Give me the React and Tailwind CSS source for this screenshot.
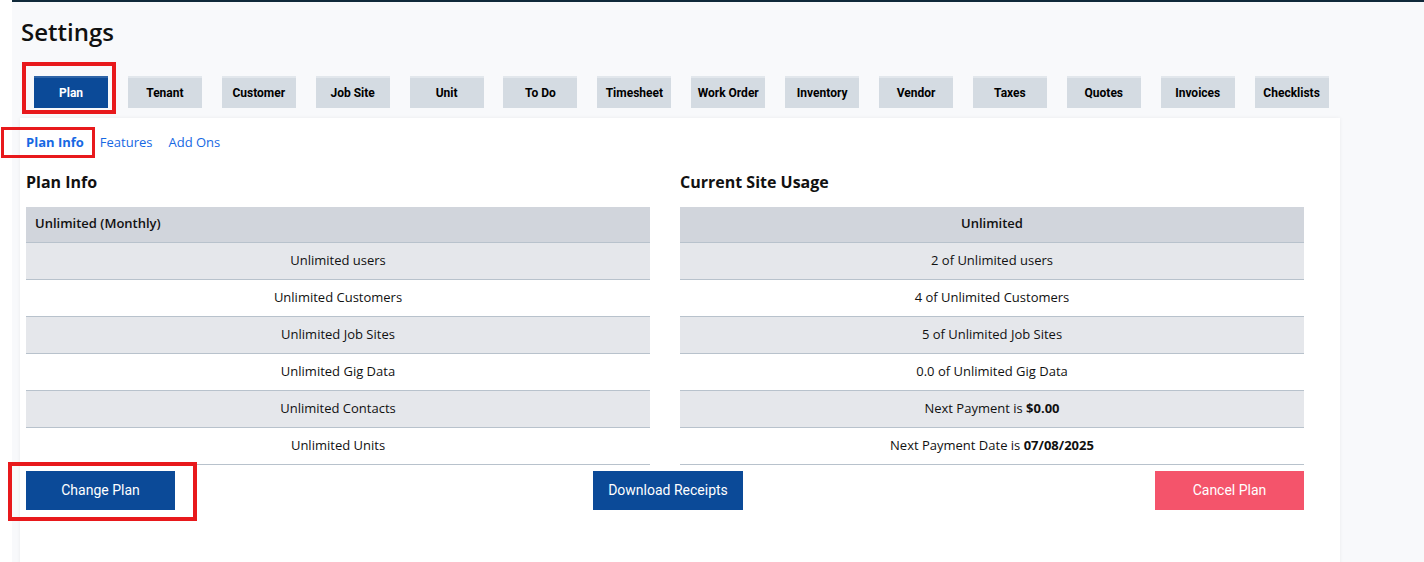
import React from 'react';

const tabs = ['Plan', 'Tenant', 'Customer', 'Job Site', 'Unit', 'To Do', 'Timesheet', 'Work Order', 'Inventory', 'Vendor', 'Taxes', 'Quotes', 'Invoices', 'Checklists'];

const planRows = ['Unlimited users', 'Unlimited Customers', 'Unlimited Job Sites', 'Unlimited Gig Data', 'Unlimited Contacts', 'Unlimited Units'];

const usageRows = [
  <span>2 of Unlimited users</span>,
  <span>4 of Unlimited Customers</span>,
  <span>5 of Unlimited Job Sites</span>,
  <span>0.0 of Unlimited Gig Data</span>,
  <span>Next Payment is <b>$0.00</b></span>,
  <span>Next Payment Date is <b>07/08/2025</b></span>,
];

function InfoTable({ header, headerAlign, rows }) {
  return (
    <div className="w-[624px]">
      <div className={`h-[36px] flex items-center px-[9px] bg-[#d1d5dc] border-b border-[#b8c2cc] font-semibold ${headerAlign}`}>
        {header}
      </div>
      {rows.map((r, i) => (
        <div
          key={i}
          className={`h-[37px] flex items-center justify-center border-b border-[#b8c2cc] ${i % 2 === 0 ? 'bg-[#e5e7eb]' : 'bg-white'}`}
        >
          {r}
        </div>
      ))}
    </div>
  );
}

export default function App() {
  return (
    <div className="relative flex min-h-[562px] bg-white text-[#111] overflow-hidden" style={{ fontFamily: '"Open Sans", sans-serif' }}>
      <div className="w-3 shrink-0" />
      <div className="flex-1 bg-[#f8f9fb] border-t-2 border-[#10293a] pl-2">
        <h1 className="pt-[15px] pl-px text-[24px] leading-[30px] font-semibold">Settings</h1>

        {/* ── Tabs ── */}
        <div className="flex gap-[19.9px] pl-[14px] mt-[29px]" style={{ fontFamily: 'Roboto, sans-serif' }}>
          {tabs.map((t, i) => (
            <div
              key={t}
              className={`w-[74px] h-[32px] flex items-center justify-center text-[12px] font-bold border-t-2 ${
                i === 0 ? 'bg-[#0b4a98] border-[#2f65a8] text-white' : 'bg-[#d4dbe2] border-[#e2e7ec] text-black'
              }`}
            >
              {t}
            </div>
          ))}
        </div>

        {/* ── Card ── */}
        <div className="w-[1320px] mt-[10px] bg-white shadow-[0_0_4px_rgba(0,0,0,0.06)] pl-1.5 pb-16 text-[13px]">
          <div className="flex gap-4 pt-[15px] text-[#1668e3]">
            <span className="font-bold">Plan Info</span>
            <span>Features</span>
            <span>Add Ons</span>
          </div>

          <div className="flex gap-[30px] mt-[17px]">
            <div>
              <h2 className="text-[16px] font-bold leading-[24px] mb-[13px]">Plan Info</h2>
              <InfoTable header="Unlimited (Monthly)" headerAlign="justify-start" rows={planRows} />
            </div>
            <div>
              <h2 className="text-[16px] font-bold leading-[24px] mb-[13px]">Current Site Usage</h2>
              <InfoTable header="Unlimited" headerAlign="justify-center" rows={usageRows} />
            </div>
          </div>

          <div className="flex w-[1278px] mt-[6px] text-[14px] text-white" style={{ fontFamily: 'Roboto, sans-serif' }}>
            <button className="w-[149px] h-[39px] bg-[#0b4a98]">Change Plan</button>
            <button className="w-[150px] h-[39px] ml-[418px] bg-[#0b4a98]">Download Receipts</button>
            <button className="w-[149px] h-[39px] ml-auto bg-[#f4546b]">Cancel Plan</button>
          </div>
        </div>
      </div>

      {/* ── Annotation boxes ── */}
      <div className="absolute left-[22px] top-[62px] w-[94px] h-[52px] border-4 border-[#e8191c]" />
      <div className="absolute left-px top-[127px] w-[94px] h-[31px] border-[3px] border-[#e8191c]" />
      <div className="absolute left-2 top-[462px] w-[189px] h-[59px] border-4 border-[#e8191c]" />
    </div>
  );
}
